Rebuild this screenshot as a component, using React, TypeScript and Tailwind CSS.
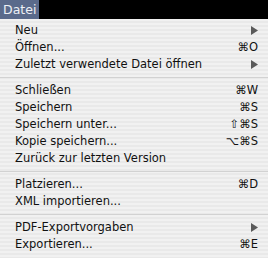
import React from 'react';

type Item =
  | { kind: 'item'; label: string; shortcut?: string; submenu?: boolean }
  | { kind: 'sep' };

const items: Item[] = [
  { kind: 'item', label: 'Neu', submenu: true },
  { kind: 'item', label: 'Öffnen...', shortcut: '⌘O' },
  { kind: 'item', label: 'Zuletzt verwendete Datei öffnen', submenu: true },
  { kind: 'sep' },
  { kind: 'item', label: 'Schließen', shortcut: '⌘W' },
  { kind: 'item', label: 'Speichern', shortcut: '⌘S' },
  { kind: 'item', label: 'Speichern unter...', shortcut: '⇧⌘S' },
  { kind: 'item', label: 'Kopie speichern...', shortcut: '⌥⌘S' },
  { kind: 'item', label: 'Zurück zur letzten Version' },
  { kind: 'sep' },
  { kind: 'item', label: 'Platzieren...', shortcut: '⌘D' },
  { kind: 'item', label: 'XML importieren...' },
  { kind: 'sep' },
  { kind: 'item', label: 'PDF-Exportvorgaben', submenu: true },
  { kind: 'item', label: 'Exportieren...', shortcut: '⌘E' },
];

const SubmenuArrow = () => (
  <svg width="7" height="9" viewBox="0 0 7 9" className="block">
    <path d="M0 0 L7 4.5 L0 9 Z" fill="#5a5a5a" />
  </svg>
);

export default function App() {
  return (
    <div className="w-[268px] h-[258px] overflow-hidden font-['DejaVu_Sans',sans-serif] select-none">
      {/* Menu bar */}
      <div className="h-[19px] bg-black flex">
        <div className="h-full px-[3px] bg-[#5a6a8b] text-[#eef0f5] text-[12.5px] leading-[19px]">
          Datei
        </div>
      </div>

      {/* Dropdown */}
      <div className="h-[239px] pt-[3px] bg-[repeating-linear-gradient(180deg,#f1f1f1_0px,#f1f1f1_2px,#e9e9e9_2px,#e9e9e9_4px)]">
        {items.map((it, i) =>
          it.kind === 'sep' ? (
            <div key={i} className="h-[9px] flex items-center">
              <div className="w-full h-px bg-[#d2d2d2]" />
            </div>
          ) : (
            <div
              key={i}
              className="h-[17px] flex items-center pl-[15px] pr-[10px] text-[11.5px] text-[#111]"
            >
              <span className="flex-1 whitespace-nowrap">{it.label}</span>
              {it.shortcut && <span className="whitespace-nowrap">{it.shortcut}</span>}
              {it.submenu && <SubmenuArrow />}
            </div>
          )
        )}
      </div>
    </div>
  );
}
